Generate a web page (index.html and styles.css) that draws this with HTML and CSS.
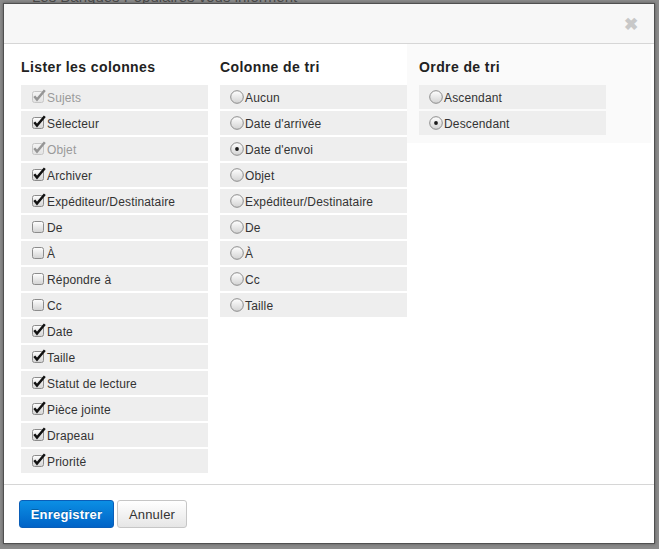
FILE: index.html
```html
<!DOCTYPE html>
<html lang="fr">
<head>
<meta charset="utf-8">
<title>Colonnes</title>
<link rel="stylesheet" href="styles.css">
</head>
<body>
<svg class="defs" width="0" height="0" aria-hidden="true">
  <defs>
    <linearGradient id="ctl" x1="0" y1="0" x2="0" y2="1">
      <stop offset="0" stop-color="#ffffff"/>
      <stop offset="1" stop-color="#d2d2d2"/>
    </linearGradient>
    <symbol id="cb-off" viewBox="0 0 14 14">
      <rect x="0.5" y="2.5" width="11" height="11" rx="2" fill="url(#ctl)" stroke="#8c8c8c"/>
    </symbol>
    <symbol id="cb-on" viewBox="0 0 14 14">
      <rect x="0.5" y="2.5" width="11" height="11" rx="2" fill="url(#ctl)" stroke="#8c8c8c"/>
      <path d="M2.3 7.3 L5 10.6 L12.8 1.2" fill="none" stroke="#111" stroke-width="2.5" stroke-linejoin="miter"/>
    </symbol>
    <symbol id="rd-off" viewBox="0 0 14 14">
      <circle cx="7" cy="7" r="6.3" fill="url(#ctl)" stroke="#8c8c8c"/>
    </symbol>
    <symbol id="rd-on" viewBox="0 0 14 14">
      <circle cx="7" cy="7" r="6.3" fill="url(#ctl)" stroke="#8c8c8c"/>
      <circle cx="7" cy="7" r="1.9" fill="#1a1a1a"/>
    </symbol>
  </defs>
</svg>

<p class="behind">Les Banques Populaires vous informent</p>

<div class="modal">
  <div class="modal-header"><span class="close">&#x2716;</span></div>
  <div class="modal-body">
    <div class="col">
      <h3 class="col-title">Lister les colonnes</h3>
      <ul class="opts">
        <li class="opt disabled"><svg class="ctl"><use href="#cb-on"/></svg>Sujets</li>
        <li class="opt"><svg class="ctl"><use href="#cb-on"/></svg>Sélecteur</li>
        <li class="opt disabled"><svg class="ctl"><use href="#cb-on"/></svg>Objet</li>
        <li class="opt"><svg class="ctl"><use href="#cb-on"/></svg>Archiver</li>
        <li class="opt"><svg class="ctl"><use href="#cb-on"/></svg>Expéditeur/Destinataire</li>
        <li class="opt"><svg class="ctl"><use href="#cb-off"/></svg>De</li>
        <li class="opt"><svg class="ctl"><use href="#cb-off"/></svg>À</li>
        <li class="opt"><svg class="ctl"><use href="#cb-off"/></svg>Répondre à</li>
        <li class="opt"><svg class="ctl"><use href="#cb-off"/></svg>Cc</li>
        <li class="opt"><svg class="ctl"><use href="#cb-on"/></svg>Date</li>
        <li class="opt"><svg class="ctl"><use href="#cb-on"/></svg>Taille</li>
        <li class="opt"><svg class="ctl"><use href="#cb-on"/></svg>Statut de lecture</li>
        <li class="opt"><svg class="ctl"><use href="#cb-on"/></svg>Pièce jointe</li>
        <li class="opt"><svg class="ctl"><use href="#cb-on"/></svg>Drapeau</li>
        <li class="opt"><svg class="ctl"><use href="#cb-on"/></svg>Priorité</li>
      </ul>
    </div>
    <div class="col">
      <h3 class="col-title">Colonne de tri</h3>
      <ul class="opts">
        <li class="opt radio"><svg class="ctl"><use href="#rd-off"/></svg>Aucun</li>
        <li class="opt radio"><svg class="ctl"><use href="#rd-off"/></svg>Date d'arrivée</li>
        <li class="opt radio"><svg class="ctl"><use href="#rd-on"/></svg>Date d'envoi</li>
        <li class="opt radio"><svg class="ctl"><use href="#rd-off"/></svg>Objet</li>
        <li class="opt radio"><svg class="ctl"><use href="#rd-off"/></svg>Expéditeur/Destinataire</li>
        <li class="opt radio"><svg class="ctl"><use href="#rd-off"/></svg>De</li>
        <li class="opt radio"><svg class="ctl"><use href="#rd-off"/></svg>À</li>
        <li class="opt radio"><svg class="ctl"><use href="#rd-off"/></svg>Cc</li>
        <li class="opt radio"><svg class="ctl"><use href="#rd-off"/></svg>Taille</li>
      </ul>
    </div>
    <div class="col col-last">
      <h3 class="col-title">Ordre de tri</h3>
      <ul class="opts">
        <li class="opt radio"><svg class="ctl"><use href="#rd-off"/></svg>Ascendant</li>
        <li class="opt radio"><svg class="ctl"><use href="#rd-on"/></svg>Descendant</li>
      </ul>
    </div>
  </div>
  <div class="modal-footer">
    <button class="btn btn-primary">Enregistrer</button>
    <button class="btn btn-default">Annuler</button>
  </div>
</div>
</body>
</html>
```

FILE: styles.css
```css
html, body {
  margin: 0;
  height: 549px;
  overflow: hidden;
}
body {
  background: #8b8b8b;
  font-family: "Liberation Sans", Arial, sans-serif;
  color: #333;
}
.defs {
  position: absolute;
  width: 0;
  height: 0;
  overflow: hidden;
}
.behind {
  position: absolute;
  top: -12px;
  left: 32px;
  margin: 0;
  font-size: 15px;
  color: #4c4c4c;
}
.modal {
  position: absolute;
  left: 3px;
  top: 3px;
  width: 650px;
  height: 539px;
  border: 1px solid #505050;
  background: #fff;
  display: flex;
  flex-direction: column;
  box-shadow: 0 0 3px rgba(0, 0, 0, 0.35);
}
.modal-header {
  height: 39px;
  background: #f7f7f7;
  border-bottom: 1px solid #d6d6d6;
  display: flex;
  justify-content: flex-end;
  align-items: center;
  padding-right: 16px;
}
.close {
  font-size: 17px;
  font-weight: bold;
  color: #c8c8c8;
  line-height: 17px;
  padding-top: 1px;
}
.modal-body {
  flex: 1;
  display: flex;
  align-items: flex-start;
  padding: 0 3px 0 5px;
}
.col {
  width: 187px;
  padding: 13px 0 11px 12px;
}
.col-last {
  flex: 1;
  background: #fafafa;
  padding-bottom: 8px;
}
.col-title {
  margin: 0 0 8px;
  font-size: 14px;
  line-height: 21px;
  height: 20px;
  font-weight: bold;
  color: #222;
  letter-spacing: 0.4px;
}
.opts {
  list-style: none;
  margin: 0;
  padding: 0;
  width: 187px;
  display: flex;
  flex-direction: column;
  gap: 2px;
}
.opt {
  height: 24px;
  box-sizing: border-box;
  padding-top: 2px;
  background: #eeeeee;
  display: flex;
  align-items: center;
  padding-left: 11px;
  font-size: 12px;
  color: #333;
  letter-spacing: 0.15px;
}
.opt.radio {
  padding-left: 10px;
}
.ctl {
  width: 14px;
  height: 14px;
  margin-right: 1px;
  margin-top: -4px;
  flex: none;
}
.radio .ctl {
  margin-top: -2px;
  margin-right: 1px;
}
.disabled {
  color: #9a9a9a;
}
.disabled .ctl {
  opacity: 0.4;
}
.modal-footer {
  border-top: 1px solid #d6d6d6;
  padding: 15px 15px;
  display: flex;
  gap: 3px;
}
.btn {
  height: 28px;
  padding: 0;
  font-family: "Liberation Sans", Arial, sans-serif;
  font-size: 13px;
  color: #333;
  background: linear-gradient(#ffffff, #e6e6e6);
  border: 1px solid #c6c6c6;
  border-radius: 3px;
  letter-spacing: 0.2px;
}
.btn-default {
  width: 70px;
}
.btn-primary {
  width: 95px;
  color: #fff;
  font-weight: bold;
  background: linear-gradient(#0b8fe4, #0063c7);
  border-color: #0a5eb8;
  text-shadow: 0 -1px 0 rgba(0, 0, 0, 0.25);
}
```
